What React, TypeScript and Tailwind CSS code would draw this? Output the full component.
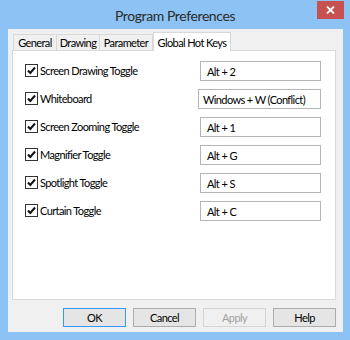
import React from "react";

const rows = [
  { label: "Screen Drawing Toggle", key: "Alt + 2" },
  { label: "Whiteboard", key: "Windows + W (Conflict)" },
  { label: "Screen Zooming Toggle", key: "Alt + 1" },
  { label: "Magnifier Toggle", key: "Alt + G" },
  { label: "Spotlight Toggle", key: "Alt + S" },
  { label: "Curtain Toggle", key: "Alt + C" },
];

function Check() {
  return (
    <div className="w-[13px] h-[13px] border border-[#333] bg-white flex items-center justify-center shrink-0">
      <svg width="9" height="9" viewBox="0 0 9 9">
        <path d="M1 4.5 L3.3 7 L8 1.5" stroke="#111" strokeWidth="2" fill="none" />
      </svg>
    </div>
  );
}

const ui = { fontFamily: "Lato, 'Liberation Sans', sans-serif", letterSpacing: "-0.6px" };

export default function App() {
  return (
    <div className="w-[350px] h-[340px] bg-[#8cc3f4] flex flex-col relative overflow-hidden" style={ui}>
      <div className="h-[29px] flex items-center justify-center shrink-0">
        <span className="text-[14px] text-[#2b2b2b] pt-[1px] tracking-[-0.4px]">
          Program Preferences
        </span>
      </div>
      <div className="absolute top-[1px] right-[6px] w-[27px] h-[18px] bg-[#c75050] flex items-center justify-center">
        <svg width="9" height="8" viewBox="0 0 9 8">
          <path d="M1 0.5 L8 7.5 M8 0.5 L1 7.5" stroke="#fff" strokeWidth="1.8" />
        </svg>
      </div>
      <div className="ml-[8px] mr-[7px] mb-[8px] flex-1 bg-[#f0f0f0] flex flex-col pl-[4px] pr-[7px] pt-[3px]">
        <div className="flex items-end h-[18px] pl-[1px] text-black whitespace-nowrap">
          <div className="h-[16px] w-[44px] border border-b-0 border-[#d9d9d9] bg-[#f0f0f0] flex items-center justify-center text-[11px] leading-none">General</div>
          <div className="h-[16px] w-[43px] border border-l-0 border-b-0 border-[#d9d9d9] bg-[#f0f0f0] flex items-center justify-center text-[11px] leading-none">Drawing</div>
          <div className="h-[16px] w-[53px] border border-l-0 border-b-0 border-[#d9d9d9] bg-[#f0f0f0] flex items-center justify-center text-[11px] leading-none">Parameter</div>
          <div className="h-[19px] w-[78px] -mb-[1px] border border-b-0 border-[#d9d9d9] bg-white flex items-center justify-center text-[11px] leading-none relative z-10">Global Hot Keys</div>
        </div>
        <div className="h-[250px] bg-white border border-[#d9d9d9] flex flex-col pt-[10px] pl-[12px] text-[11px] text-black whitespace-nowrap">
          {rows.map((r, i) => (
            <div key={i} className="h-[28px] flex items-start">
              <div className="w-[175px] flex items-center gap-[2px] pt-[3px]">
                <Check />
                <span className="leading-none">{r.label}</span>
              </div>
              <div className={`h-[20px] border border-[#b5b5b5] bg-white flex items-center leading-none ${i === 1 ? "-ml-[2px] w-[123px] pl-[4px]" : "w-[121px] pl-[6px]"}`}>
                {r.key}
              </div>
            </div>
          ))}
        </div>
        <div className="flex justify-end gap-[7px] mt-[8px] text-[11px]">
          <button className="w-[63px] h-[19px] border border-[#3399ff] bg-[#e5e5e5] text-black leading-none">OK</button>
          <button className="w-[63px] h-[19px] border border-[#acacac] bg-[#e5e5e5] text-black leading-none">Cancel</button>
          <button className="w-[63px] h-[19px] border border-[#d5d5d5] bg-[#f0f0f0] text-[#a0a0a0] leading-none">Apply</button>
          <button className="w-[63px] h-[19px] border border-[#acacac] bg-[#e5e5e5] text-black leading-none">Help</button>
        </div>
      </div>
    </div>
  );
}
